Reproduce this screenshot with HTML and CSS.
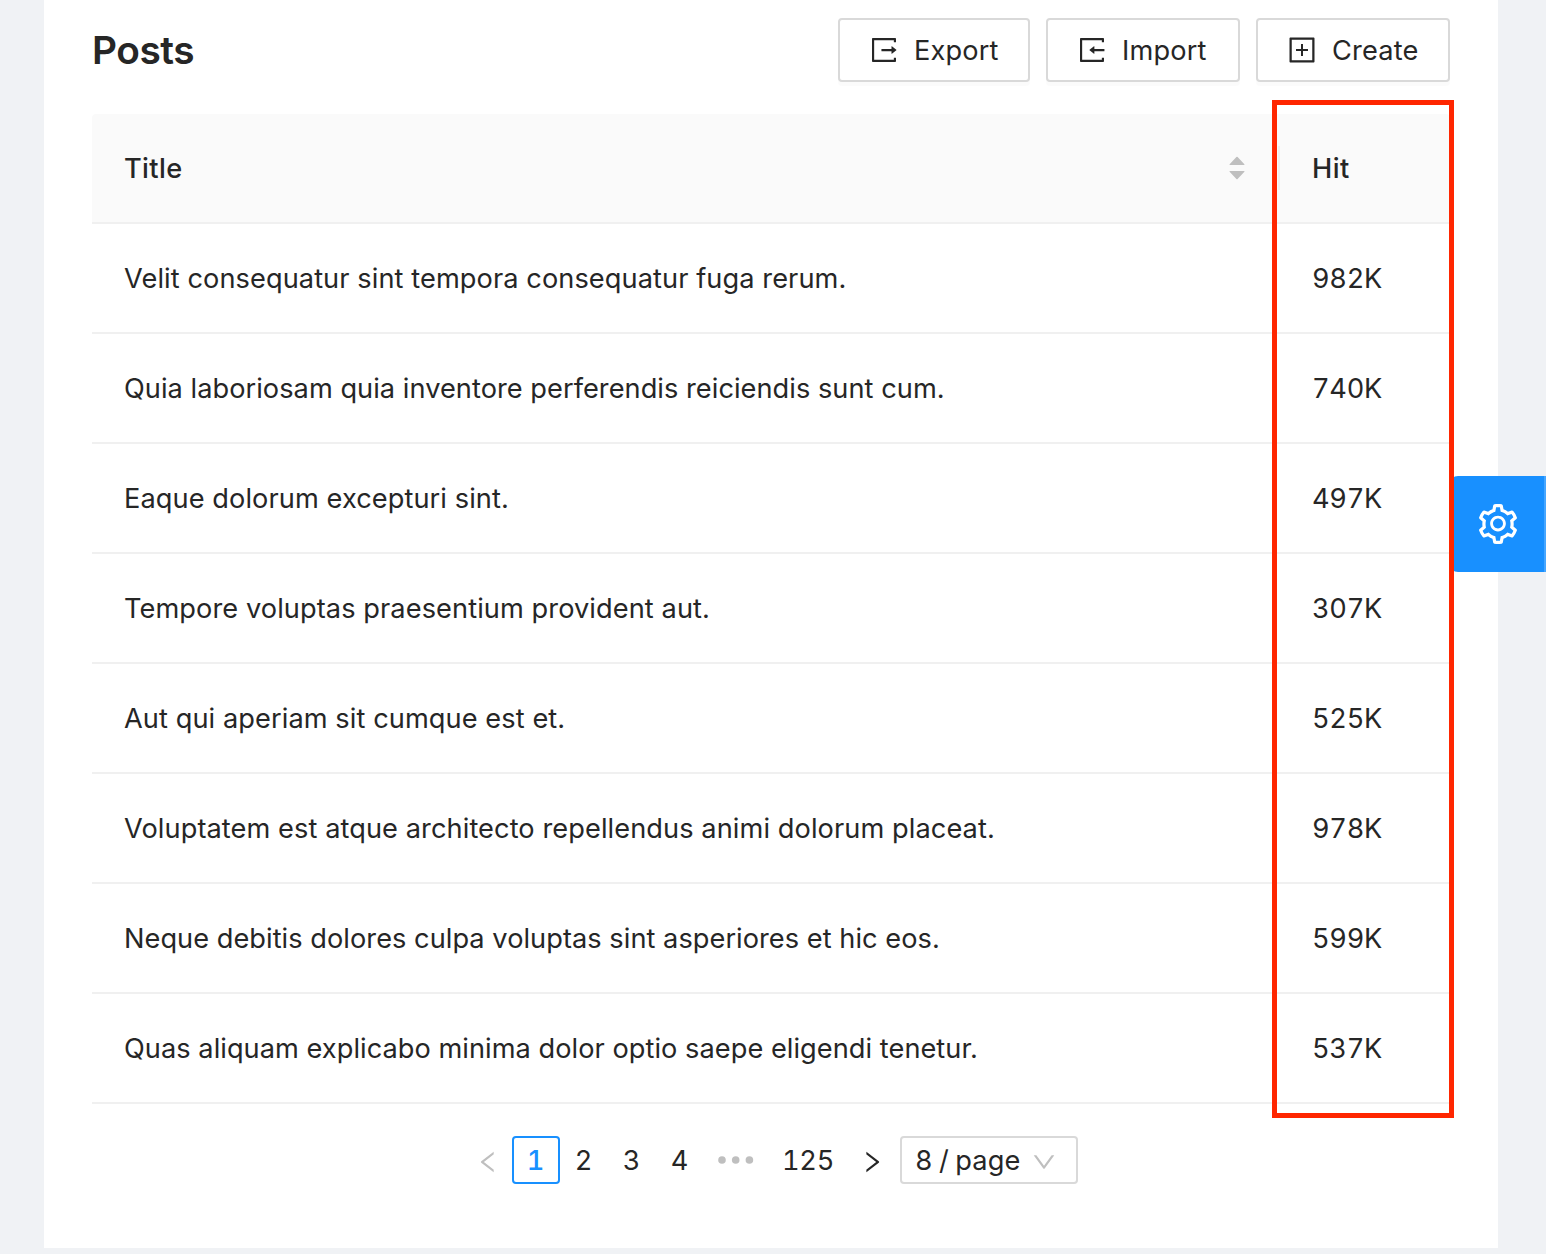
FILE: index.html
```html
<!DOCTYPE html>
<html lang="en">
<head>
<meta charset="utf-8">
<title>Posts</title>
<link rel="stylesheet" href="styles.css">
</head>
<body>
<main class="card">
  <header class="head">
    <h1 class="title">Posts</h1>
    <div class="actions">
      <button class="btn btn-export"><svg class="icon" viewBox="64 64 896 896"><path d="M888.3 757.4h-53.8c-4.2 0-7.7 3.5-7.7 7.7v61.8H197.1V197.1h629.8v61.8c0 4.2 3.5 7.7 7.7 7.7h53.8c4.2 0 7.7-3.4 7.7-7.7V158.7c0-17-13.7-30.7-30.7-30.7H158.7c-17 0-30.7 13.7-30.7 30.7v706.6c0 17 13.7 30.7 30.7 30.7h706.6c17 0 30.7-13.7 30.7-30.7V765.1c0-4.3-3.5-7.7-7.7-7.7zm18.6-251.7L765 393.7c-5.3-4.2-13-.4-13 6.3v76H438c-4.4 0-8 3.6-8 8v56c0 4.4 3.6 8 8 8h314v76c0 6.7 7.8 10.5 13 6.3l141.9-112a8 8 0 000-12.6z"/></svg><span>Export</span></button>
      <button class="btn btn-import"><svg class="icon" viewBox="64 64 896 896"><path d="M888.3 757.4h-53.8c-4.2 0-7.7 3.5-7.7 7.7v61.8H197.1V197.1h629.8v61.8c0 4.2 3.5 7.7 7.7 7.7h53.8c4.2 0 7.7-3.4 7.7-7.7V158.7c0-17-13.7-30.7-30.7-30.7H158.7c-17 0-30.7 13.7-30.7 30.7v706.6c0 17 13.7 30.7 30.7 30.7h706.6c17 0 30.7-13.7 30.7-30.7V765.1c0-4.3-3.5-7.7-7.7-7.7zM902 476H588v-76c0-6.7-7.8-10.5-13-6.3l-141.9 112a8 8 0 000 12.6l141.9 112c5.3 4.2 13 .4 13-6.3v-76h314c4.4 0 8-3.6 8-8v-56c0-4.4-3.6-8-8-8z"/></svg><span>Import</span></button>
      <button class="btn btn-create"><svg class="icon" viewBox="64 64 896 896"><path d="M328 544h152v152c0 4.400 3.600 8 8 8h48c4.400 0 8-3.600 8-8V544h152c4.400 0 8-3.600 8-8v-48c0-4.400-3.600-8-8-8H544V328c0-4.400-3.600-8-8-8h-48c-4.400 0-8 3.600-8 8v152H328c-4.400 0-8 3.600-8 8v48c0 4.400 3.600 8 8 8z"/><path d="M880 112H144c-17.700 0-32 14.300-32 32v736c0 17.700 14.300 32 32 32h736c17.700 0 32-14.300 32-32V144c0-17.700-14.300-32-32-32zm-40 728H184V184h656v656z"/></svg><span>Create</span></button>
    </div>
  </header>

  <section class="table">
    <div class="row row-head">
      <div class="cell cell-title"><span>Title</span>
        <svg class="sorter" viewBox="0 0 16 24"><path d="M8.600 1.100l6.800 7.100q.5.800-.4.800H1q-.9 0-.4-.8L7.400 1.100q.6-.6 1.200 0zM8.600 22.900l6.800-7.100q.5-.8-.4-.8H1q-.9 0-.4.800l6.800 7.100q.6.600 1.200 0z"/></svg>
      </div>
      <div class="cell cell-hit">Hit</div>
    </div>
    <div class="row"><div class="cell cell-title">Velit consequatur sint tempora consequatur fuga rerum.</div><div class="cell cell-hit">982K</div></div>
    <div class="row"><div class="cell cell-title snug">Quia laboriosam quia inventore perferendis reiciendis sunt cum.</div><div class="cell cell-hit">740K</div></div>
    <div class="row"><div class="cell cell-title">Eaque dolorum excepturi sint.</div><div class="cell cell-hit">497K</div></div>
    <div class="row"><div class="cell cell-title">Tempore voluptas praesentium provident aut.</div><div class="cell cell-hit">307K</div></div>
    <div class="row"><div class="cell cell-title">Aut qui aperiam sit cumque est et.</div><div class="cell cell-hit">525K</div></div>
    <div class="row"><div class="cell cell-title">Voluptatem est atque architecto repellendus animi dolorum placeat.</div><div class="cell cell-hit">978K</div></div>
    <div class="row"><div class="cell cell-title snug">Neque debitis dolores culpa voluptas sint asperiores et hic eos.</div><div class="cell cell-hit">599K</div></div>
    <div class="row"><div class="cell cell-title snug">Quas aliquam explicabo minima dolor optio saepe eligendi tenetur.</div><div class="cell cell-hit">537K</div></div>
    <div class="highlight"></div>
  </section>

  <nav class="pager">
    <span class="page page-arrow muted"><svg class="arrow" viewBox="64 64 896 896"><path d="M724 218.300V141c0-6.700-7.700-10.400-12.900-6.300L260.300 486.800a31.860 31.860 0 000 50.300l450.800 352.100c5.300 4.100 12.900.4 12.900-6.300v-77.300c0-4.900-2.300-9.600-6.100-12.600l-360-281 360-281.100c3.800-3 6.100-7.700 6.100-12.600z"/></svg></span>
    <span class="page page-current">1</span>
    <span class="page">2</span>
    <span class="page">3</span>
    <span class="page">4</span>
    <span class="page page-gap muted"><svg class="dots" viewBox="0 0 36 8"><circle cx="4" cy="4" r="3.800"/><circle cx="17.700" cy="4" r="3.800"/><circle cx="31.400" cy="4" r="3.800"/></svg></span>
    <span class="page page-last">125</span>
    <span class="page page-arrow"><svg class="arrow" viewBox="64 64 896 896"><path d="M765.700 486.800L314.900 134.700A7.970 7.970 0 00302 141v77.300c0 4.900 2.300 9.600 6.100 12.600l360 281.100-360 281.100c-3.900 3-6.100 7.700-6.100 12.600V883c0 6.700 7.700 10.400 12.900 6.300l450.800-352.100a31.960 31.960 0 000-50.400z"/></svg></span>
    <span class="size"><span>8 / page</span><svg class="arrow muted" viewBox="64 64 896 896"><path d="M884 256h-75c-5.100 0-9.900 2.500-12.900 6.600L512 654.200 227.900 262.600c-3-4.100-7.800-6.600-12.900-6.600h-75c-6.500 0-10.300 7.400-6.500 12.700l352.600 486.100c12.800 17.600 39 17.600 51.700 0l352.600-486.100c3.900-5.300.1-12.700-6.400-12.700z"/></svg></span>
  </nav>
</main>
<button class="settings"><svg viewBox="64 64 896 896"><path d="M924.8 625.7l-65.5-56c3.1-19 4.7-38.4 4.7-57.8s-1.6-38.8-4.700-57.8l65.500-56a32.030 32.030 0 009.300-35.200l-.9-2.600a443.740 443.740 0 00-79.700-137.900l-1.800-2.100a32.120 32.120 0 00-35.100-9.500l-81.300 28.900c-30-24.600-63.500-44-99.700-57.600l-15.700-85a32.050 32.050 0 00-25.800-25.700l-2.700-.5c-52.100-9.400-106.900-9.400-159 0l-2.700.5a32.050 32.050 0 00-25.800 25.700l-15.800 85.400a351.860 351.860 0 00-99 57.400l-81.900-29.100a32 32 0 00-35.100 9.500l-1.800 2.100a446.020 446.020 0 00-79.700 137.900l-.9 2.600c-4.500 12.500-.8 26.500 9.300 35.200l66.300 56.600c-3.100 18.800-4.600 38-4.600 57.100 0 19.200 1.500 38.400 4.600 57.100L99 625.500a32.030 32.030 0 00-9.300 35.200l.9 2.600c18.100 50.400 44.900 96.900 79.700 137.900l1.800 2.100a32.120 32.120 0 0035.100 9.500l81.900-29.100c29.800 24.500 63.100 43.900 99 57.400l15.800 85.400a32.050 32.050 0 0025.800 25.700l2.700.5a449.400 449.400 0 00159 0l2.700-.5a32.050 32.050 0 0025.800-25.700l15.700-85a350 350 0 0099.700-57.600l81.300 28.900a32 32 0 0035.100-9.500l1.800-2.100c34.800-41.100 61.600-87.500 79.700-137.900l.9-2.600c4.500-12.300.8-26.300-9.300-35zM788.300 465.900c2.500 15.100 3.800 30.600 3.800 46.100s-1.300 31-3.800 46.100l-6.600 40.100 74.700 63.900a370.030 370.030 0 01-42.600 73.600L721 702.800l-31.400 25.800c-23.900 19.600-50.500 35-79.300 45.800l-38.100 14.300-17.900 97a377.500 377.500 0 01-85 0l-17.900-97.200-37.800-14.500c-28.500-10.800-55-26.200-78.700-45.700l-31.400-25.900-93.400 33.200c-17-22.900-31.200-47.600-42.600-73.600l75.500-64.500-6.500-40c-2.400-14.900-3.700-30.300-3.700-45.500 0-15.300 1.200-30.600 3.700-45.500l6.500-40-75.500-64.500c11.300-26.100 25.600-50.700 42.600-73.600l93.400 33.200 31.400-25.900c23.700-19.500 50.200-34.900 78.700-45.700l37.900-14.300 17.900-97.200c28.100-3.200 56.800-3.200 85 0l17.900 97 38.100 14.300c28.700 10.800 55.400 26.200 79.300 45.800l31.400 25.800 92.800-32.900c17 22.900 31.200 47.600 42.600 73.600L781.800 426l6.500 39.900zM512 326c-97.200 0-176 78.800-176 176s78.800 176 176 176 176-78.800 176-176-78.800-176-176-176zm79.200 255.200A111.600 111.600 0 01512 614c-29.900 0-58-11.700-79.200-32.800A111.600 111.600 0 01400 502c0-29.900 11.700-58 32.800-79.200C454 401.600 482.100 390 512 390c29.900 0 58 11.600 79.200 32.800A111.600 111.600 0 01624 502c0 29.900-11.700 58-32.800 79.200z"/></svg></button>
</body>
</html>
```
FILE: styles.css
```css
* { box-sizing: border-box; }

body {
  margin: 0;
  height: 1254px;
  overflow: hidden;
  background: #f0f2f5;
  color: #262626;
  font: 400 27.2px/44px Inter, "Liberation Sans", sans-serif;
  letter-spacing: 0.08px;
}

svg { display: block; flex: none; fill: currentColor; }

.card {
  width: 1454px;
  height: 1248px;
  margin-left: 44px;
  padding: 18px 48px 0;
  background: #fff;
}

.head {
  display: flex;
  justify-content: space-between;
  align-items: center;
  height: 64px;
  margin-bottom: 32px;
}

.title {
  margin: 0;
  padding-bottom: 1px;
  font-size: 38.8px;
  font-weight: 600;
  letter-spacing: -0.45px;
}

.actions { display: flex; gap: 16px; }

.btn {
  display: flex;
  align-items: center;
  gap: 16px;
  height: 64px;
  padding: 0 0 0 30px;
  border: 2px solid #d9d9d9;
  border-radius: 4px;
  background: #fff;
  box-shadow: 0 4px 0 rgba(0, 0, 0, 0.016);
  color: inherit;
  font: inherit;
  letter-spacing: 0.15px;
}

.btn span { padding-top: 1px; }
.btn-export { width: 192px; }
.btn-import { width: 194px; }
.btn-create { width: 194px; }

.icon { width: 28px; height: 28px; }

.table { position: relative; width: 1358px; }

.row {
  display: grid;
  grid-template-columns: 1188px 170px;
  height: 110px;
  border-bottom: 2px solid #f0f0f0;
}

.row-head {
  border-radius: 4px 4px 0 0;
  background: #fafafa;
  font-weight: 500;
  letter-spacing: 0.35px;
}

.cell {
  display: flex;
  align-items: center;
  justify-content: space-between;
  padding: 1px 32px 0;
  white-space: nowrap;
}

.cell-hit {
  font-variant-numeric: tabular-nums;
  letter-spacing: -0.3px;
}

.snug { letter-spacing: 0.04px; }

.row-head .cell-hit { letter-spacing: 0.5px; }

.row-head .cell-title {
  align-self: center;
  height: 44px;
  padding: 0 33px 0 32px;
  border-right: 2px solid #f0f0f0;
}

.row-head .cell-title span { padding-top: 1px; }

.sorter { width: 16px; height: 24px; color: #bfbfbf; }

.highlight {
  position: absolute;
  top: -14px;
  left: 1180px;
  width: 182px;
  height: 1018px;
  border: 5px solid #ff2600;
  z-index: 2;
}

.pager {
  display: flex;
  align-items: center;
  height: 48px;
  margin-top: 32px;
  padding-left: 372px;
  font-variant-numeric: tabular-nums;
}

.page {
  display: flex;
  justify-content: center;
  align-items: center;
  width: 48px;
  height: 48px;
  padding: 1px 1px 0 0;
}

.page-current {
  border: 2px solid #1890ff;
  border-radius: 4px;
  color: #1890ff;
  font-weight: 500;
}

.page-gap { width: 64px; padding-top: 0; }
.page-last { width: 80px; padding-right: 0; letter-spacing: -0.3px; }
.page-arrow { padding: 4px 0 0; }
.muted { color: #bfbfbf; }
.arrow { width: 24px; height: 24px; }
.dots { width: 36px; height: 8px; }

.size {
  display: flex;
  align-items: center;
  justify-content: space-between;
  width: 178px;
  height: 48px;
  margin-left: 4px;
  padding: 0 20px 0 13px;
  border: 2px solid #d9d9d9;
  border-radius: 4px;
  word-spacing: -1px;
}

.size span { padding-top: 1px; }
.size .arrow { margin-top: 4px; }

.settings {
  position: absolute;
  top: 476px;
  left: 1450px;
  display: flex;
  align-items: center;
  justify-content: center;
  width: 96px;
  height: 96px;
  padding: 0;
  border: 0;
  border-radius: 8px 0 0 8px;
  background: #1890ff;
  box-shadow: inset -2px 0 0 #46a6ff;
  color: #fff;
}

.settings svg { width: 40px; height: 40px; }
```
